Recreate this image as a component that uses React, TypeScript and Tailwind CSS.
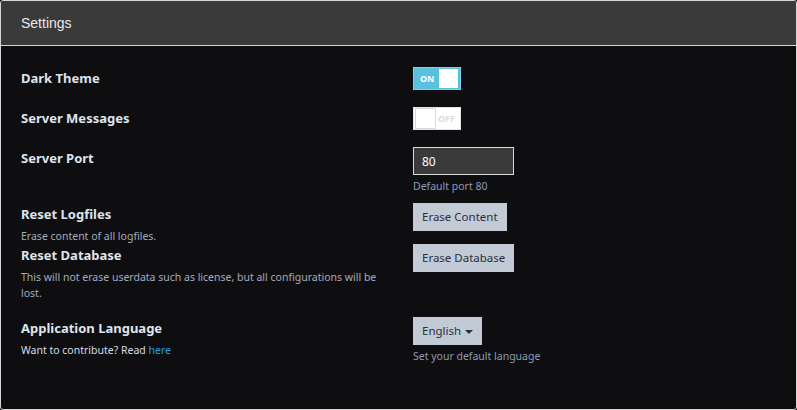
import { useState } from 'react';

function Toggle({ on }: { on: boolean }) {
  return on ? (
    <div className="flex h-[23px] w-[48px] items-center justify-between border border-[#7fd0ea] bg-[#5bc0de] pl-[6px] pr-[2px]">
      <span className="text-[9px] font-bold leading-none text-white">ON</span>
      <span className="h-[19px] w-[19px] bg-white" />
    </div>
  ) : (
    <div className="flex h-[23px] w-[48px] items-center justify-between border border-[#e4e4e4] bg-white pl-[1px] pr-[5px]">
      <span className="h-[21px] w-[21px] border border-[#d8d8d8] bg-white" />
      <span className="text-[9px] font-bold leading-none text-[#dcdcdc]">OFF</span>
    </div>
  );
}

function Label({ children }: { children: React.ReactNode }) {
  return (
    <div className="text-[13px] font-bold leading-[22px] text-[#dfe3ec]">
      {children}
    </div>
  );
}

function Hint({ children }: { children: React.ReactNode }) {
  return (
    <div className="mt-[3px] text-[10.5px] leading-4 text-[#a3acbc]">
      {children}
    </div>
  );
}

function GrayButton({ children }: { children: React.ReactNode }) {
  return (
    <button
      type="button"
      className="flex h-[28px] items-center gap-[4px] bg-[#c2cad6] px-[9px] text-[11.5px] text-[#2b2f3c]"
    >
      {children}
    </button>
  );
}

const row = 'grid grid-cols-[362px_1fr] gap-[30px]';

export default function App() {
  const [port] = useState('80');

  return (
    <div
      className="h-[410px] w-[797px] bg-[#0e0e11]"
      style={{ fontFamily: '"Noto Sans", "Open Sans", sans-serif' }}
    >
      <div className="flex h-full flex-col overflow-hidden rounded-[3px] border border-[#d6d6d6] bg-[#0e0e11]">
        <div className="flex h-[45px] items-center border-b border-[#d6d6d6] bg-[#3a3a3a] px-[20px]">
          <span
            className="text-[14px] text-[#e9e9e9]"
            style={{ fontFamily: '"Liberation Sans", Arial, sans-serif' }}
          >
            Settings
          </span>
        </div>

        <div className="px-[20px] pt-[21px]">
          <div className={`mb-[17px] ${row}`}>
            <Label>Dark Theme</Label>
            <Toggle on />
          </div>

          <div className={`mb-[17px] ${row}`}>
            <Label>Server Messages</Label>
            <Toggle on={false} />
          </div>

          <div className={`mb-[9px] ${row}`}>
            <Label>Server Port</Label>
            <div>
              <input
                readOnly
                value={port}
                className="h-[28px] w-[101px] border border-[#d9d9d9] bg-[#3a3a3a] px-[8px] text-[12px] text-white outline-none"
              />
              <div className="mt-[3px] text-[10.5px] leading-4 text-[#8d9cb4]">
                Default port 80
              </div>
            </div>
          </div>

          <div className={row}>
            <div>
              <Label>Reset Logfiles</Label>
              <Hint>Erase content of all logfiles.</Hint>
            </div>
            <div>
              <GrayButton>Erase Content</GrayButton>
            </div>
          </div>

          <div className={`mb-[16px] ${row}`}>
            <div>
              <Label>Reset Database</Label>
              <Hint>
                This will not erase userdata such as license, but all
                configurations will be lost.
              </Hint>
            </div>
            <div>
              <GrayButton>Erase Database</GrayButton>
            </div>
          </div>

          <div className={row}>
            <div>
              <Label>Application Language</Label>
              <div className="mt-[3px] text-[10.5px] leading-4 text-[#d6dbe6]">
                Want to contribute? Read{' '}
                <a href="#" className="text-[#2a9fdc]">
                  here
                </a>
              </div>
            </div>
            <div>
              <GrayButton>
                English
                <span className="mt-[1px] h-0 w-0 border-x-[4px] border-t-[4px] border-x-transparent border-t-[#2b2f3c]" />
              </GrayButton>
              <div className="mt-[3px] text-[10.5px] leading-4 text-[#8d9cb4]">
                Set your default language
              </div>
            </div>
          </div>
        </div>
      </div>
    </div>
  );
}
